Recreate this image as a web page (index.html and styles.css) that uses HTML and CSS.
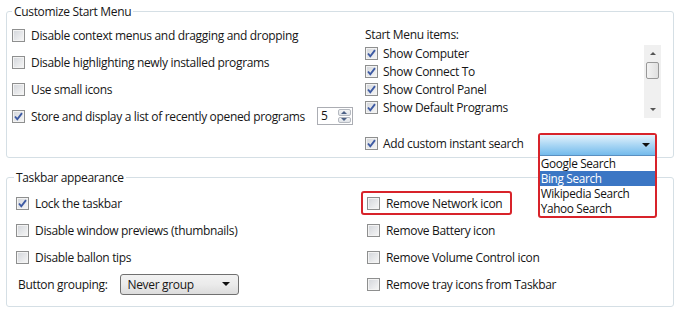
FILE: index.html
```html
<!DOCTYPE html>
<html lang="en">
<head>
  <meta charset="UTF-8" />
  <title>Start Menu and Taskbar tweaks</title>
  <link rel="stylesheet" href="styles.css">
</head>
<body>

  <div class="dialog">

    <fieldset class="group group-start">
      <legend>Customize Start Menu</legend>
      <div class="cols">
        <div class="col">
          <label class="opt"><span class="cb"></span>Disable context menus and dragging and dropping</label>
          <label class="opt"><span class="cb"></span>Disable highlighting newly installed programs</label>
          <label class="opt"><span class="cb"></span>Use small icons</label>
          <div class="opt">
            <label class="opt"><span class="cb on"><svg viewBox="0 0 11 11"><path d="M2 5.5 L4.3 8.3 L9 2.2" /></svg></span>Store and display a list of recently opened programs</label>
            <span class="spin">
              <span class="spin-val">5</span>
              <span class="spin-btns">
                <span class="spin-btn"><span class="tri up"></span></span>
                <span class="spin-btn"><span class="tri down"></span></span>
              </span>
            </span>
          </div>
        </div>

        <div class="col">
          <div class="caption">Start Menu items:</div>
          <div class="listbox">
            <div class="items">
              <label class="opt"><span class="cb on"><svg viewBox="0 0 11 11"><path d="M2 5.5 L4.3 8.3 L9 2.2" /></svg></span>Show Computer</label>
              <label class="opt"><span class="cb on"><svg viewBox="0 0 11 11"><path d="M2 5.5 L4.3 8.3 L9 2.2" /></svg></span>Show Connect To</label>
              <label class="opt"><span class="cb on"><svg viewBox="0 0 11 11"><path d="M2 5.5 L4.3 8.3 L9 2.2" /></svg></span>Show Control Panel</label>
              <label class="opt"><span class="cb on"><svg viewBox="0 0 11 11"><path d="M2 5.5 L4.3 8.3 L9 2.2" /></svg></span>Show Default Programs</label>
            </div>
            <div class="vscroll">
              <span class="sb-arrow"><span class="tri up"></span></span>
              <span class="sb-thumb"></span>
              <span class="sb-track"></span>
              <span class="sb-arrow"><span class="tri down"></span></span>
            </div>
          </div>
          <div class="opt search-row">
            <label class="opt"><span class="cb on"><svg viewBox="0 0 11 11"><path d="M2 5.5 L4.3 8.3 L9 2.2" /></svg></span>Add custom instant search</label>
            <div class="combo">
              <div class="combo-pop">
                <div class="combo-field"><span class="tri down dark"></span></div>
                <ul class="combo-list">
                  <li>Google Search</li>
                  <li class="selected">Bing Search</li>
                  <li>Wikipedia Search</li>
                  <li>Yahoo Search</li>
                </ul>
              </div>
            </div>
          </div>
        </div>
      </div>
    </fieldset>

    <fieldset class="group group-taskbar">
      <legend>Taskbar appearance</legend>
      <div class="cols">
        <div class="col">
          <label class="opt"><span class="cb on"><svg viewBox="0 0 11 11"><path d="M2 5.5 L4.3 8.3 L9 2.2" /></svg></span>Lock the taskbar</label>
          <label class="opt"><span class="cb"></span>Disable window previews (thumbnails)</label>
          <label class="opt"><span class="cb"></span>Disable ballon tips</label>
          <div class="opt grouping">
            <span>Button grouping:</span>
            <span class="select">Never group<span class="tri down dark"></span></span>
          </div>
        </div>

        <div class="col">
          <label class="opt flagged"><span class="cb"></span>Remove Network icon</label>
          <label class="opt"><span class="cb"></span>Remove Battery icon</label>
          <label class="opt"><span class="cb"></span>Remove Volume Control icon</label>
          <label class="opt"><span class="cb"></span>Remove tray icons from Taskbar</label>
        </div>
      </div>
    </fieldset>

  </div>

</body>
</html>
```

FILE: styles.css
```css
body {
  margin: 0;
  background: #fff;
  color: #161616;
  font-family: 'Open Sans', 'Noto Sans', sans-serif;
  font-size: 12px;
  letter-spacing: -0.33px;
}

.dialog {
  padding: 4px 6px 0 6px;
  width: 668px;
}

.group {
  margin: 0;
  padding: 0;
  border: 1px solid #d5dfe5;
  border-radius: 3px;
  min-width: 0;
}

.group legend {
  margin-left: 5px;
  padding: 0 2px;
  line-height: 15px;
}

.group-start .cols {
  display: grid;
  grid-template-columns: 353px 1fr;
  padding: 7px 0 3px 5px;
}

.group-taskbar {
  margin-top: 12px;
}

.group-taskbar legend {
  margin-left: 7px;
}

.group-taskbar .cols {
  display: grid;
  grid-template-columns: 351px 1fr;
  padding: 9px 0 13px 9px;
}

.col {
  display: flex;
  flex-direction: column;
  align-items: flex-start;
}

.group-start .col:first-child,
.group-taskbar .col {
  gap: 9px;
}

.opt {
  display: flex;
  align-items: center;
  height: 18px;
  white-space: nowrap;
}

.cb {
  flex: none;
  width: 13px;
  height: 13px;
  margin-right: 6px;
  box-sizing: border-box;
  border: 1px solid #8e8f8f;
  background: linear-gradient(135deg, #d2d5da, #f7f7f7);
  box-shadow: inset 0 0 0 1px #f3f3f3;
  display: flex;
  align-items: center;
  justify-content: center;
}

.cb svg {
  width: 11px;
  height: 11px;
}

.cb svg path {
  fill: none;
  stroke: #3d5aa3;
  stroke-width: 1.9;
}

/* spin box */
.spin {
  display: flex;
  margin-left: 12px;
  width: 36px;
  height: 18px;
  box-sizing: border-box;
  border: 1px solid #abadb3;
}

.spin-val {
  flex: 1;
  padding-left: 3px;
  line-height: 16px;
}

.spin-btns {
  display: flex;
  flex-direction: column;
  width: 13px;
  padding: 1px;
  gap: 1px;
}

.spin-btn {
  flex: 1;
  border: 1px solid #b5b9c0;
  border-radius: 2px;
  background: linear-gradient(#f4f4f4, #dfe3e8);
  display: flex;
  align-items: center;
  justify-content: center;
}

.tri {
  width: 0;
  height: 0;
  border-left: 3px solid transparent;
  border-right: 3px solid transparent;
}

.tri.up {
  border-bottom: 3px solid #4d6185;
}

.tri.down {
  border-top: 3px solid #4d6185;
}

.tri.dark {
  border-left-width: 4px;
  border-right-width: 4px;
  border-top: 4px solid #111;
}

/* start menu items */
.caption {
  height: 18px;
  line-height: 18px;
}

.listbox {
  display: flex;
  width: 296px;
  height: 72px;
}

.items {
  flex: 1;
}

.items .opt .cb {
  margin-right: 5px;
}

.vscroll {
  display: flex;
  flex-direction: column;
  width: 17px;
  margin-top: 1px;
  height: 73px;
  background: #f0f0f0;
}

.sb-arrow {
  height: 17px;
  display: flex;
  align-items: center;
  justify-content: center;
}

.sb-arrow .tri.up {
  border-bottom-color: #555;
}

.sb-arrow .tri.down {
  border-top-color: #555;
}

.sb-thumb {
  height: 17px;
  margin: 0 2px;
  box-sizing: border-box;
  border: 1px solid #989898;
  border-radius: 2px;
  background: linear-gradient(90deg, #f3f3f3, #e0e0e0);
}

.sb-track {
  flex: 1;
}

.search-row {
  margin-top: 16px;
  height: 22px;
}

.search-row .cb {
  margin-right: 5px;
}

.combo {
  position: relative;
  margin-left: 14px;
  width: 119px;
  height: 22px;
}

.combo-pop {
  position: absolute;
  top: 1px;
  left: 0;
  right: 0;
  z-index: 2;
  border: 2px solid #d8232a;
  border-radius: 3px;
  background: #fff;
}

.combo-field {
  height: 20px;
  background: linear-gradient(#e4f2fc, #a9d6f4 50%, #74bbec);
  border-bottom: 1px solid #5a8fc0;
  display: flex;
  align-items: center;
  justify-content: flex-end;
  padding-right: 5px;
}

.combo-list {
  list-style: none;
  margin: 0;
  padding: 0;
}

.combo-list li {
  height: 15px;
  line-height: 15px;
  font-size: 11.8px;
  padding-left: 1px;
  color: #111;
  overflow: hidden;
}

.combo-list li.selected {
  background: #3b76c4;
  color: #fff;
}

/* taskbar group */
.grouping span:first-child {
  margin-left: 2px;
}

.select {
  display: flex;
  align-items: center;
  justify-content: space-between;
  margin-left: 13px;
  width: 119px;
  height: 21px;
  box-sizing: border-box;
  padding: 0 8px 0 6px;
  border: 1px solid #707070;
  border-radius: 3px;
  background: linear-gradient(#f2f2f2, #ebebeb 50%, #dcdcdc);
}

.flagged {
  margin: -3px 0 -3px -6px;
  padding: 1px 8px 1px 4px;
  border: 2px solid #d8232a;
  border-radius: 3px;
}
```
